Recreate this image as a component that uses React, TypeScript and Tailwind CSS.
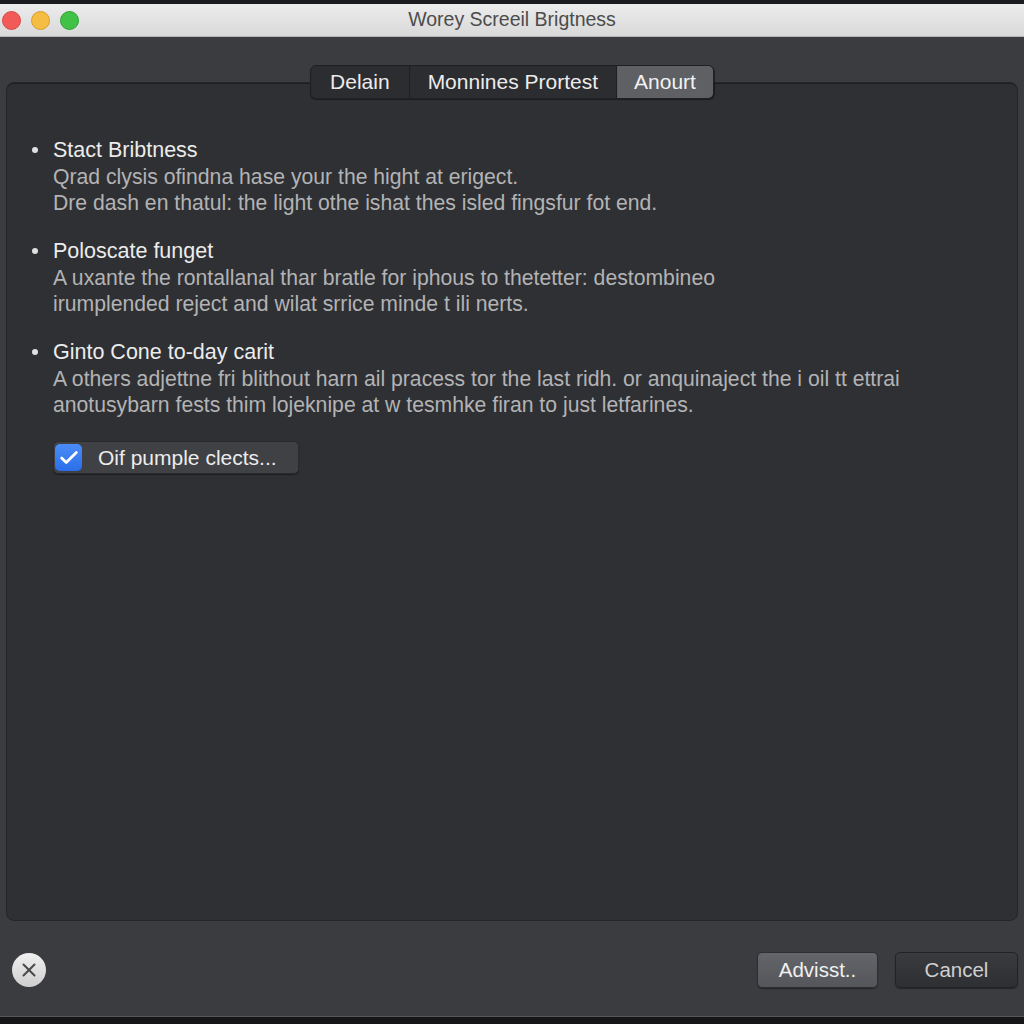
import { Check, X } from 'lucide-react';

const sections = [
  {
    title: 'Stact Bribtness',
    lines: [
      'Qrad clysis ofindna hase your the hight at erigect.',
      'Dre dash en thatul: the light othe ishat thes isled fingsfur fot end.',
    ],
  },
  {
    title: 'Poloscate funget',
    lines: [
      'A uxante the rontallanal thar bratle for iphous to thetetter: destombineo',
      'irumplended reject and wilat srrice minde t ili nerts.',
    ],
  },
  {
    title: 'Ginto Cone to-day carit',
    lines: [
      'A others adjettne fri blithout harn ail pracess tor the last ridh. or anquinaject the i oil tt ettrai',
      'anotusybarn fests thim lojeknipe at w tesmhke firan to just letfarines.',
    ],
  },
];

export default function App() {
  return (
    <div className="w-[1024px] h-[1024px] flex flex-col bg-[#1b1b1d] overflow-hidden" style={{ fontFamily: '"Liberation Sans", Arial, sans-serif' }}>
      <div className="h-[4px] bg-[#1b1c1f]" />
      {/* title bar */}
      <div className="relative h-[33px] flex items-center justify-center bg-gradient-to-b from-[#ececec] to-[#d9d9d9] border-b border-[#b5b5b5]">
        <div className="absolute left-[2px] top-[7px] flex gap-[10px]">
          <span className="w-[19px] h-[19px] rounded-full bg-[#f25a57] border border-[#d94843]" />
          <span className="w-[19px] h-[19px] rounded-full bg-[#f6bd44] border border-[#d99d2e]" />
          <span className="w-[19px] h-[19px] rounded-full bg-[#3fc245] border border-[#2ea235]" />
        </div>
        <span className="text-[19.5px] text-[#4c4c4c]">Worey Screeil Brigtness</span>
      </div>

      {/* window body */}
      <div className="flex-1 flex flex-col bg-[#3b3c3f] px-[6px]">
        <div className="relative flex-1 flex flex-col mt-[45px]">
          <div className="absolute left-1/2 -translate-x-1/2 -top-[17px] flex h-[34px] rounded-[6px] border border-[#1f2022] bg-[#2c2d30] overflow-hidden shadow-[0_1px_1px_rgba(0,0,0,0.4)]">
            <div className="px-[19px] flex items-center text-[21px] text-[#ececec] border-r border-[#1f2022]">Delain</div>
            <div className="px-[18px] flex items-center text-[21px] text-[#ececec] border-r border-[#1f2022]">Monnines Prortest</div>
            <div className="px-[17px] flex items-center text-[21px] text-[#f2f2f2] bg-[#5f6064]">Anourt</div>
          </div>
          <div className="h-[839px] rounded-[8px] bg-[#2f3033] border border-[#25262a] shadow-[inset_0_1px_0_rgba(0,0,0,0.35)] pt-[53px] pl-[46px]">
            <div className="flex flex-col gap-[21px]">
              {sections.map((s) => (
                <div key={s.title} className="flex flex-col">
                  <div className="relative h-[28px] flex items-center text-[21.5px] text-[#ececec]">
                    <span className="absolute -left-[21px] top-[11px] w-[6px] h-[6px] rounded-full bg-[#e0e0e0]" />
                    {s.title}
                  </div>
                  {s.lines.map((l) => (
                    <div key={l} className="h-[26px] flex items-center text-[21.2px] text-[#b3b3b5] whitespace-nowrap">
                      {l}
                    </div>
                  ))}
                </div>
              ))}
            </div>
            <div className="mt-[23px] w-[246px] h-[33px] flex items-center gap-[16px] rounded-[5px] bg-[#404145] border border-[#2a2b2e] shadow-[0_1px_1px_rgba(0,0,0,0.4)] pl-[1px]">
              <span className="w-[27px] h-[27px] rounded-[5px] bg-gradient-to-b from-[#4a8df8] to-[#2b6ee8] flex items-center justify-center">
                <Check size={22} strokeWidth={3} color="#ffffff" />
              </span>
              <span className="text-[21px] text-[#ececec]">Oif pumple clects...</span>
            </div>
          </div>
        </div>

        {/* footer */}
        <div className="h-[95px] flex items-center justify-between pt-[3px]">
          <span className="ml-[6px] w-[34px] h-[34px] rounded-full bg-gradient-to-b from-[#f0f0f0] to-[#cfcfcf] flex items-center justify-center">
            <X size={22} strokeWidth={2.2} color="#4a4a4a" />
          </span>
          <div className="flex gap-[17px] items-center">
            <button className="w-[121px] h-[36px] rounded-[5px] bg-gradient-to-b from-[#64656a] to-[#55565a] border border-[#2e2f32] text-[20.5px] text-[#f0f0f0] shadow-[0_1px_1px_rgba(0,0,0,0.4)]">Advisst..</button>
            <button className="w-[123px] h-[36px] rounded-[5px] bg-gradient-to-b from-[#3a3b3e] to-[#2e2f32] border border-[#222326] text-[20.5px] text-[#d0d0d0] shadow-[0_1px_1px_rgba(0,0,0,0.4)]">Cancel</button>
          </div>
        </div>
      </div>
      <div className="h-[8px] bg-[#161618] border-t border-[#55565a]" />
    </div>
  );
}
